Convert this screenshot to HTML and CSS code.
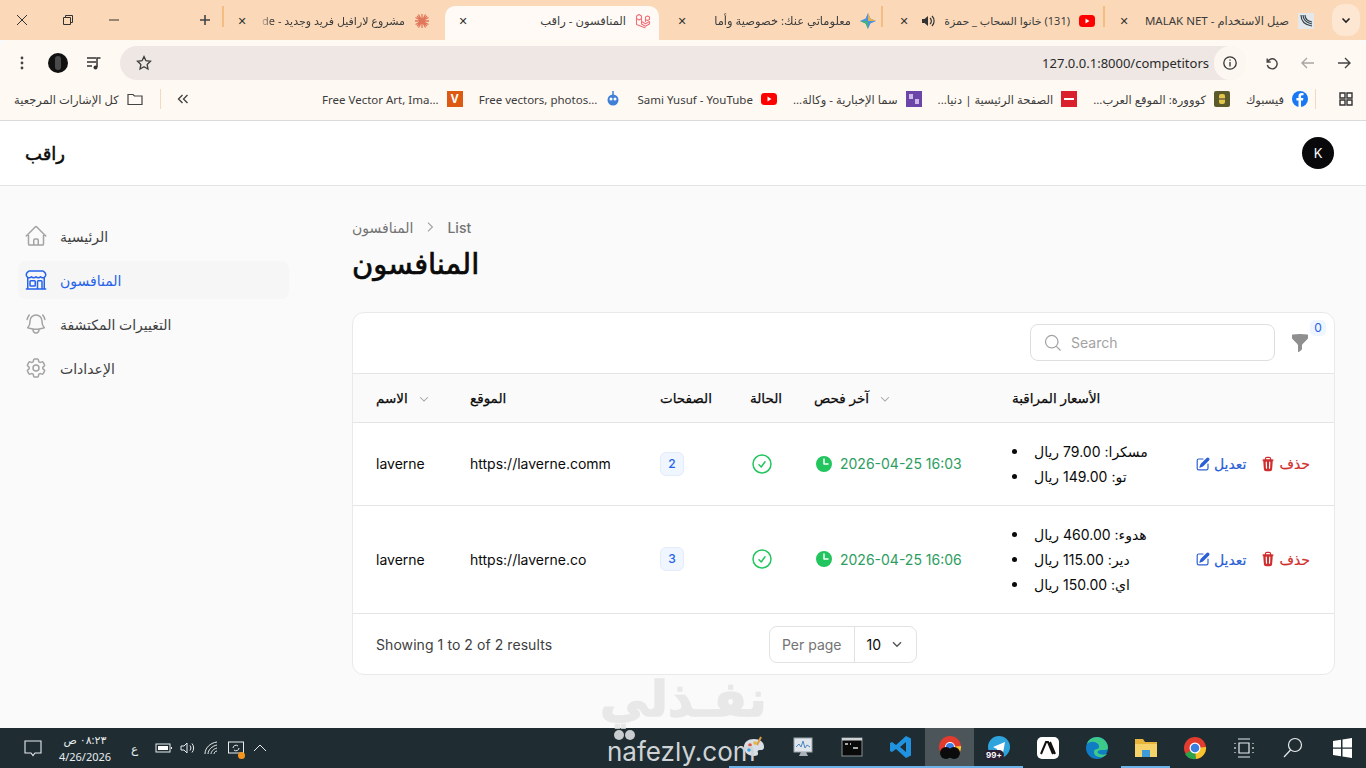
FILE: index.html
```html
<!DOCTYPE html>
<html lang="en">
<head>
    <meta charset="UTF-8">
    <title>المنافسون - راقب</title>
    <link rel="stylesheet" href="styles.css">
</head>
<body>

    <!-- Browser tabs -->
    <div class="tabstrip">
        <div class="win-controls">
            <svg class="win-icon" viewBox="0 0 12 12"><path d="M1 1l10 10M11 1L1 11"/></svg>
            <svg class="win-icon" viewBox="0 0 12 12"><path d="M1.5 3.5h7v7h-7zM3.5 3.5v-2h7v7h-2"/></svg>
            <svg class="win-icon" viewBox="0 0 12 12"><path d="M1 6h10"/></svg>
        </div>
        <svg class="new-tab" viewBox="0 0 12 12"><path d="M6 1v10M1 6h10"/></svg>
        <div class="tab tab-first">
            <span class="tab-x">✕</span>
            <span class="tab-title">مشروع لارافيل فريد وجديد - de</span>
            <svg class="favicon" viewBox="0 0 16 16"><path d="M8 1v14M1 8h14M3 3l10 10M13 3L3 13M4.5 1.5l7 13M11.5 1.5l-7 13M1.5 4.5l13 7M14.5 4.5l-13 7" stroke="#e0765a" stroke-width="1.3"/></svg>
        </div>
        <div class="tab tab-active">
            <span class="tab-x">✕</span>
            <span class="tab-title">المنافسون - راقب</span>
            <svg class="favicon" viewBox="0 0 16 16" fill="none" stroke="#f0717a" stroke-width="1.1" stroke-linejoin="round"><path d="M1.500 3l2.500-1.500L6.500 3v8l4 2.300 4-2.300V8.500l-4 2.300-4-2.300M1.500 3v8.500l9 3.500M6.500 5.500L4 7 1.500 5.500M10.500 4l2-1 2 1v2.500l-2 1-2-1zM10.500 6.500V9"/></svg>
        </div>
        <div class="tab tab-gem">
            <span class="tab-x">✕</span>
            <span class="tab-title">معلوماتي عنك: خصوصية وأما</span>
            <svg class="favicon" viewBox="0 0 16 16"><path d="M8 0l2.400 5.600L16 8l-5.600 2.400L8 16l-2.400-5.600L0 8l5.600-2.400z" fill="#4a90e2"/><path d="M8 0l2.400 5.600L16 8H8z" fill="#e8b04a"/><path d="M0 8h8v8L5.600 10.400z" fill="#3fb27f"/></svg>
        </div>
        <div class="tab tab-audio">
            <span class="tab-x">✕</span>
            <svg class="favicon tab-sound" viewBox="0 0 16 16"><path d="M2 6h2.500L8 3v10L4.500 10H2z" fill="#333"/><path d="M10 5a4 4 0 0 1 0 6M12 3a7 7 0 0 1 0 10" fill="none" stroke="#333" stroke-width="1.200"/></svg>
            <span class="tab-title">(131) خانوا السحاب _ حمزة</span>
            <svg class="favicon" viewBox="0 0 16 16"><rect y="2" width="16" height="12" rx="3.500" fill="#f00"/><path d="M6.500 5.500v5l4-2.500z" fill="#fff"/></svg>
        </div>
        <div class="tab">
            <span class="tab-x">✕</span>
            <span class="tab-title">صيل الاستخدام - MALAK NET</span>
            <svg class="favicon" viewBox="0 0 16 16" fill="none" stroke="#31424e" stroke-width="1.200"><rect width="16" height="16" fill="#e4e8ea" stroke="none"/><path d="M3 2c0 6 4 10 11 11M5 2c0 4 3 8 9 9M7 2c0 3 2 6 7 7"/></svg>
        </div>
        <div class="tab-search"><svg viewBox="0 0 12 12"><path d="M2.500 4.500L6 8l3.500-3.500"/></svg></div>
    </div>

    <!-- Address bar -->
    <div class="toolbar">
        <svg class="tool-icon" viewBox="0 0 16 16"><circle cx="8" cy="3" r="1.400" fill="#444"/><circle cx="8" cy="8" r="1.400" fill="#444"/><circle cx="8" cy="13" r="1.400" fill="#444"/></svg>
        <span class="profile"><i></i></span>
        <svg class="tool-icon" viewBox="0 0 16 16"><path d="M1 3h9M1 7h9M1 11h5" stroke="#333" stroke-width="1.500" fill="none"/><path d="M11 12V3h3.500" stroke="#333" stroke-width="1.500" fill="none"/><circle cx="9.500" cy="12.500" r="2" fill="#333"/></svg>
        <div class="omnibox">
            <svg class="star" viewBox="0 0 24 24"><path d="M12 3.500l2.600 5.500 6 .8-4.400 4.200 1.100 6L12 17l-5.300 3 1.100-6-4.400-4.200 6-.8z"/></svg>
            <span class="url">127.0.0.1:8000/competitors</span>
            <span class="site-info"><svg viewBox="0 0 16 16"><circle cx="8" cy="8" r="6.200"/><path d="M8 7v4.500M8 4.500v1.200"/></svg></span>
        </div>
        <svg class="nav-icon nav-first" viewBox="0 0 16 16"><path d="M3.200 3.500v3.500h3.500M3.500 7a5 5 0 1 1-.2 3"/></svg>
        <svg class="nav-icon nav-dim" viewBox="0 0 16 16"><path d="M14 8H2M7 3L2 8l5 5"/></svg>
        <svg class="nav-icon" viewBox="0 0 16 16"><path d="M2 8h12M9 3l5 5-5 5"/></svg>
    </div>

    <!-- Bookmarks -->
    <div class="bookmarks">
        <span class="bm-text bm-rtl">كل الإشارات المرجعية</span>
        <svg class="bm-folder" viewBox="0 0 16 16"><path d="M1 3.500h5l1.500 1.500H15v8.500H1z"/></svg>
        <span class="bm-sep"></span>
        <svg class="bm-more" viewBox="0 0 12 12"><path d="M5.500 2L1.500 6l4 4M10.500 2l-4 4 4 4"/></svg>
        <div class="bm-list">
            <span class="bm-text">Free Vector Art, Ima...</span>
            <span class="bm-fav bm-v">V</span>
            <span class="bm-text">Free vectors, photos...</span>
            <svg class="bm-fav" viewBox="0 0 16 16"><circle cx="8" cy="9" r="5.500" fill="#3f7fd8"/><circle cx="6" cy="8" r="1.500" fill="#fff"/><circle cx="10" cy="8" r="1.500" fill="#fff"/><path d="M8 0v4" stroke="#3f7fd8" stroke-width="1.500"/></svg>
            <span class="bm-text">Sami Yusuf - YouTube</span>
            <svg class="bm-fav" viewBox="0 0 16 16"><rect y="2" width="16" height="12" rx="3.500" fill="#f00"/><path d="M6.500 5.500v5l4-2.500z" fill="#fff"/></svg>
            <span class="bm-text bm-rtl">سما الإخبارية - وكالة...</span>
            <svg class="bm-fav" viewBox="0 0 16 16"><rect width="16" height="16" fill="#6b45a8"/><rect x="3" y="3" width="4" height="5" fill="#cdb9e8"/><rect x="9" y="8" width="4" height="5" fill="#cdb9e8"/></svg>
            <span class="bm-text bm-rtl">الصفحة الرئيسية | دنيا...</span>
            <svg class="bm-fav" viewBox="0 0 16 16"><rect width="16" height="16" fill="#d9202c"/><path d="M3 8h10" stroke="#fff" stroke-width="2"/></svg>
            <span class="bm-text bm-rtl">كووورة: الموقع العرب...</span>
            <svg class="bm-fav" viewBox="0 0 16 16"><rect width="16" height="16" rx="2" fill="#5a5a2c"/><rect x="5" y="3" width="6" height="10" rx="2" fill="#e5c64a"/><path d="M5 8h6" stroke="#333"/></svg>
            <span class="bm-text">فيسبوك</span>
            <svg class="bm-fav" viewBox="0 0 16 16"><circle cx="8" cy="8" r="8" fill="#1877f2"/><path d="M9 16V9.500h2l.4-2.500H9V5.600c0-.8.300-1.300 1.400-1.300h1.100V2.100C11 2 10.300 2 9.700 2 7.800 2 6.500 3.100 6.500 5.300V7H4.400v2.500h2.100V16z" fill="#fff"/></svg>
        </div>
        <span class="bm-sep bm-sep-right"></span>
        <svg class="bm-grid" viewBox="0 0 16 16"><path d="M2 2h5v5H2zM9 2h5v5H9zM2 9h5v5H2zM9 9h5v5H9z"/></svg>
    </div>

    <!-- App header -->
    <div class="topbar">
        <div class="brand">راقب</div>
        <div class="avatar">K</div>
    </div>

    <div class="layout">
        <div class="sidebar">
            <a class="nav-item">
                <svg class="nav-svg" viewBox="0 0 24 24"><path d="m2.250 12 8.954-8.955c.44-.439 1.152-.439 1.591 0L21.750 12M4.500 9.750v10.125c0 .621.504 1.125 1.125 1.125H9.750v-4.875c0-.621.504-1.125 1.125-1.125h2.250c.621 0 1.125.504 1.125 1.125V21h4.125c.621 0 1.125-.504 1.125-1.125V9.750M8.250 21h8.250"/></svg>
                الرئيسية
            </a>
            <a class="nav-item nav-active">
                <svg class="nav-svg" viewBox="0 0 24 24"><path d="M13.500 21v-7.500a.75.75 0 0 1 .75-.75h3a.75.75 0 0 1 .75.75V21m-4.500 0H2.360m11.140 0H18m0 0h3.640m-1.390 0V9.349M3.750 21V9.349m0 0a3.001 3.001 0 0 0 3.750-.615A2.993 2.993 0 0 0 9.750 9.750c.896 0 1.700-.393 2.250-1.016a2.993 2.993 0 0 0 2.250 1.016c.896 0 1.700-.393 2.250-1.015a3.001 3.001 0 0 0 3.750.614m-16.500 0a3.004 3.004 0 0 1-.621-4.720l1.189-1.190A1.500 1.500 0 0 1 5.378 3h13.243a1.500 1.500 0 0 1 1.060.44l1.190 1.189a3 3 0 0 1-.621 4.720M6.750 18h3.750a.75.75 0 0 0 .75-.75V13.500a.75.75 0 0 0-.75-.75H6.750a.75.75 0 0 0-.75.75v3.750c0 .414.336.75.75.75Z"/></svg>
                المنافسون
            </a>
            <a class="nav-item">
                <svg class="nav-svg" viewBox="0 0 24 24"><path d="M14.857 17.082a23.848 23.848 0 0 0 5.454-1.310A8.967 8.967 0 0 1 18 9.750V9A6 6 0 0 0 6 9v.75a8.967 8.967 0 0 1-2.312 6.022c1.733.64 3.560 1.085 5.455 1.310m5.714 0a24.255 24.255 0 0 1-5.714 0m5.714 0a3 3 0 1 1-5.714 0M3.124 7.500A8.969 8.969 0 0 1 5.292 3m13.416 0a8.969 8.969 0 0 1 2.168 4.500"/></svg>
                التغييرات المكتشفة
            </a>
            <a class="nav-item">
                <svg class="nav-svg" viewBox="0 0 24 24"><path d="M9.594 3.940c.09-.542.56-.94 1.110-.94h2.593c.55 0 1.020.398 1.110.94l.213 1.281c.063.374.313.686.645.87.074.04.147.083.22.127.325.196.72.257 1.075.124l1.217-.456a1.125 1.125 0 0 1 1.370.49l1.296 2.247a1.125 1.125 0 0 1-.26 1.431l-1.003.827c-.293.241-.438.613-.43.992a7.723 7.723 0 0 1 0 .255c-.008.378.137.75.43.991l1.004.827c.424.35.534.955.26 1.430l-1.298 2.247a1.125 1.125 0 0 1-1.369.491l-1.217-.456c-.355-.133-.75-.072-1.076.124a6.470 6.470 0 0 1-.22.128c-.331.183-.581.495-.644.869l-.213 1.281c-.09.543-.56.94-1.110.94h-2.594c-.55 0-1.019-.398-1.110-.94l-.213-1.281c-.062-.374-.312-.686-.644-.87a6.520 6.520 0 0 1-.22-.127c-.325-.196-.72-.257-1.076-.124l-1.217.456a1.125 1.125 0 0 1-1.369-.49l-1.297-2.247a1.125 1.125 0 0 1 .26-1.431l1.004-.827c.292-.24.437-.613.43-.991a6.932 6.932 0 0 1 0-.255c.007-.38-.138-.751-.43-.992l-1.004-.827a1.125 1.125 0 0 1-.26-1.430l1.297-2.247a1.125 1.125 0 0 1 1.370-.491l1.216.456c.356.133.751.072 1.076-.124.072-.044.146-.086.22-.128.332-.183.582-.495.644-.869l.214-1.280Z"/><path d="M15 12a3 3 0 1 1-6 0 3 3 0 0 1 6 0Z"/></svg>
                الإعدادات
            </a>
        </div>

        <div class="main">
            <div class="breadcrumb">
                <span>المنافسون</span>
                <svg viewBox="0 0 20 20"><path d="M7.500 4.500L13 10l-5.500 5.500"/></svg>
                <span>List</span>
            </div>
            <h1 class="page-title">المنافسون</h1>

            <div class="card">
                <div class="card-tools">
                    <div class="search">
                        <svg viewBox="0 0 24 24"><path d="m21 21-5.197-5.197m0 0A7.500 7.500 0 1 0 5.196 5.196a7.500 7.500 0 0 0 10.607 10.607Z"/></svg>
                        <span>Search</span>
                    </div>
                    <div class="filter">
                        <svg viewBox="0 0 20 20"><path d="M2.628 1.601C5.028 1.206 7.490 1 10 1s4.973.206 7.372.601a.75.75 0 0 1 .628.74v2.288a2.250 2.250 0 0 1-.659 1.590l-4.682 4.683a2.250 2.250 0 0 0-.659 1.590v3.037c0 .684-.31 1.330-.844 1.757l-1.937 1.550A.75.75 0 0 1 8 18.250v-5.757a2.250 2.250 0 0 0-.659-1.591L2.659 6.220A2.250 2.250 0 0 1 2 4.629V2.340a.75.75 0 0 1 .628-.74Z"/></svg>
                        <span class="filter-count">0</span>
                    </div>
                </div>

                <table class="data-table">
                    <colgroup>
                        <col class="col-name"><col class="col-site"><col class="col-pages"><col class="col-status"><col class="col-last"><col class="col-prices"><col class="col-actions">
                    </colgroup>
                    <thead>
                        <tr>
                            <th>الاسم <svg class="sort" viewBox="0 0 20 20"><path d="M4.500 7.500L10 13l5.500-5.500"/></svg></th>
                            <th>الموقع</th>
                            <th>الصفحات</th>
                            <th>الحالة</th>
                            <th>آخر فحص <svg class="sort" viewBox="0 0 20 20"><path d="M4.500 7.500L10 13l5.500-5.500"/></svg></th>
                            <th>الأسعار المراقبة</th>
                            <th></th>
                        </tr>
                    </thead>
                    <tbody>
                        <tr class="row-short">
                            <td>laverne</td>
                            <td>https://laverne.comm</td>
                            <td><span class="badge">2</span></td>
                            <td><svg class="ok" viewBox="0 0 24 24"><path d="M9 12.750 11.250 15 15 9.750M21 12a9 9 0 1 1-18 0 9 9 0 0 1 18 0Z"/></svg></td>
                            <td><span class="checked"><svg viewBox="0 0 20 20"><path fill-rule="evenodd" d="M10 18a8 8 0 1 0 0-16 8 8 0 0 0 0 16Zm.75-13a.75.75 0 0 0-1.500 0v5c0 .414.336.75.75.75h4a.75.75 0 0 0 0-1.500h-3.250V5Z"/></svg>2026-04-25 16:03</span></td>
                            <td>
                                <ul class="prices">
                                    <li>مسكرا: 79.00 ريال</li>
                                    <li>تو: 149.00 ريال</li>
                                </ul>
                            </td>
                            <td>
                                <div class="actions">
                                    <a class="act act-edit"><svg viewBox="0 0 20 20"><path d="m5.433 13.917 1.262-3.155A4 4 0 0 1 7.580 9.420l6.920-6.918a2.121 2.121 0 0 1 3 3l-6.920 6.918c-.383.383-.84.685-1.343.886l-3.154 1.262a.5.5 0 0 1-.65-.65Z"/><path d="M3.500 5.750c0-.69.56-1.250 1.250-1.250H10A.75.75 0 0 0 10 3H4.750A2.750 2.750 0 0 0 2 5.750v9.500A2.750 2.750 0 0 0 4.750 18h9.500A2.750 2.750 0 0 0 17 15.250V10a.75.75 0 0 0-1.500 0v5.250c0 .69-.56 1.250-1.250 1.250h-9.500c-.69 0-1.250-.56-1.250-1.250v-9.500Z"/></svg>تعديل</a>
                                    <a class="act act-del"><svg viewBox="0 0 20 20"><path fill-rule="evenodd" d="M8.750 1A2.750 2.750 0 0 0 6 3.750v.443c-.795.077-1.584.176-2.365.298a.75.75 0 1 0 .23 1.482l.149-.022.841 10.518A2.750 2.750 0 0 0 7.596 19h4.807a2.750 2.750 0 0 0 2.742-2.530l.841-10.520.149.023a.75.75 0 0 0 .23-1.482A41.030 41.030 0 0 0 14 4.193V3.750A2.750 2.750 0 0 0 11.250 1h-2.500ZM10 4c.84 0 1.673.025 2.500.075V3.750c0-.69-.56-1.250-1.250-1.250h-2.500c-.69 0-1.250.56-1.250 1.250v.325C8.327 4.025 9.160 4 10 4ZM8.580 7.720a.75.75 0 0 0-1.500.06l.3 7.500a.75.75 0 1 0 1.500-.06l-.3-7.500Zm4.340.06a.75.75 0 1 0-1.500-.06l-.3 7.500a.75.75 0 1 0 1.500.06l.3-7.500Z"/></svg>حذف</a>
                                </div>
                            </td>
                        </tr>
                        <tr class="row-tall">
                            <td>laverne</td>
                            <td>https://laverne.co</td>
                            <td><span class="badge">3</span></td>
                            <td><svg class="ok" viewBox="0 0 24 24"><path d="M9 12.750 11.250 15 15 9.750M21 12a9 9 0 1 1-18 0 9 9 0 0 1 18 0Z"/></svg></td>
                            <td><span class="checked"><svg viewBox="0 0 20 20"><path fill-rule="evenodd" d="M10 18a8 8 0 1 0 0-16 8 8 0 0 0 0 16Zm.75-13a.75.75 0 0 0-1.500 0v5c0 .414.336.75.75.75h4a.75.75 0 0 0 0-1.500h-3.250V5Z"/></svg>2026-04-25 16:06</span></td>
                            <td>
                                <ul class="prices">
                                    <li>هدوء: 460.00 ريال</li>
                                    <li>دير: 115.00 ريال</li>
                                    <li>اي: 150.00 ريال</li>
                                </ul>
                            </td>
                            <td>
                                <div class="actions">
                                    <a class="act act-edit"><svg viewBox="0 0 20 20"><path d="m5.433 13.917 1.262-3.155A4 4 0 0 1 7.580 9.420l6.920-6.918a2.121 2.121 0 0 1 3 3l-6.920 6.918c-.383.383-.84.685-1.343.886l-3.154 1.262a.5.5 0 0 1-.65-.65Z"/><path d="M3.500 5.750c0-.69.56-1.250 1.250-1.250H10A.75.75 0 0 0 10 3H4.750A2.750 2.750 0 0 0 2 5.750v9.500A2.750 2.750 0 0 0 4.750 18h9.500A2.750 2.750 0 0 0 17 15.250V10a.75.75 0 0 0-1.500 0v5.250c0 .69-.56 1.250-1.250 1.250h-9.500c-.69 0-1.250-.56-1.250-1.250v-9.500Z"/></svg>تعديل</a>
                                    <a class="act act-del"><svg viewBox="0 0 20 20"><path fill-rule="evenodd" d="M8.750 1A2.750 2.750 0 0 0 6 3.750v.443c-.795.077-1.584.176-2.365.298a.75.75 0 1 0 .23 1.482l.149-.022.841 10.518A2.750 2.750 0 0 0 7.596 19h4.807a2.750 2.750 0 0 0 2.742-2.530l.841-10.520.149.023a.75.75 0 0 0 .23-1.482A41.030 41.030 0 0 0 14 4.193V3.750A2.750 2.750 0 0 0 11.250 1h-2.500ZM10 4c.84 0 1.673.025 2.500.075V3.750c0-.69-.56-1.250-1.250-1.250h-2.500c-.69 0-1.250.56-1.250 1.250v.325C8.327 4.025 9.160 4 10 4ZM8.580 7.720a.75.75 0 0 0-1.500.06l.3 7.500a.75.75 0 1 0 1.500-.06l-.3-7.500Zm4.340.06a.75.75 0 1 0-1.500-.06l-.3 7.500a.75.75 0 1 0 1.500.06l.3-7.500Z"/></svg>حذف</a>
                                </div>
                            </td>
                        </tr>
                    </tbody>
                </table>

                <div class="card-foot">
                    <span class="results">Showing 1 to 2 of 2 results</span>
                    <div class="per-page">
                        <span class="per-label">Per page</span>
                        <span class="per-value">10 <svg viewBox="0 0 20 20"><path d="M5.500 8L10 12.500 14.500 8"/></svg></span>
                    </div>
                </div>
            </div>
        </div>
    </div>

    <!-- Windows taskbar -->
    <div class="taskbar">
        <div class="tray">
            <svg class="tray-note" viewBox="0 0 18 18"><path d="M1 2h16v12h-6l-2 2.500L7 14H1z"/></svg>
            <div class="clock"><span>٠٨:٢٣ ص</span><span>4/26/2026</span></div>
            <span class="lang">ع</span>
            <svg class="tray-icon" viewBox="0 0 18 18"><rect x="1" y="5" width="14" height="8"/><rect x="3" y="7" width="10" height="4" fill="#fff" stroke="none"/><path d="M16.500 8v2"/></svg>
            <svg class="tray-icon" viewBox="0 0 18 18"><path d="M2 7h3l3-3v10l-3-3H2zM11 6.500a4 4 0 0 1 0 5M13 4.500a7 7 0 0 1 0 9"/></svg>
            <svg class="tray-icon" viewBox="0 0 18 18"><path d="M2 15C2 9 7 4 14 3M5 15c0-4 4-8 9-9M8 15c0-2 2-5 6-6M11 15c0-1 1-3 3-3"/></svg>
            <span class="tray-update">
                <svg class="tray-icon" viewBox="0 0 18 18"><rect x="1.500" y="3" width="15" height="11"/><path d="M6 9a3 3 0 0 1 5-2M12 9a3 3 0 0 1-5 2"/></svg>
                <i></i>
            </span>
            <svg class="tray-icon" viewBox="0 0 18 18"><path d="M3 12l6-6 6 6"/></svg>
        </div>
        <div class="apps">
            <span class="app app-open"><svg viewBox="0 0 24 24"><path d="M12 4c6 0 10 3 10 8 0 3-2 3-4 3-2 0-3 1-2 3 .5 2-1 3-4 3C6 21 2 17 2 12s4-8 10-8z" fill="#d9dfe6"/><circle cx="8" cy="10" r="1.800" fill="#e0553f"/><circle cx="13" cy="8" r="1.800" fill="#e0b93f"/><circle cx="7" cy="15" r="1.800" fill="#3f9fe0"/><path d="M19 2l-4 8" stroke="#e09a3f" stroke-width="2"/></svg></span>
            <span class="app app-open"><svg viewBox="0 0 24 24"><rect x="3" y="3" width="18" height="14" fill="#dfe5ea" stroke="#9aa3ab"/><path d="M5 12l3-3 2 3 2-6 2 7 2-3 3 2" fill="none" stroke="#4a86c5"/><path d="M8 21h9l-2-4H10z" fill="#aab2b8"/></svg></span>
            <span class="app app-open"><svg viewBox="0 0 24 24"><rect x="2" y="3" width="20" height="18" fill="#0a0a0a" stroke="#8b8f92"/><rect x="2" y="3" width="20" height="2.500" fill="#cfd3d6"/><path d="M5 9h3M10 9h1M13 13h5" stroke="#ddd" stroke-width="1.300"/></svg></span>
            <span class="app app-open"><svg viewBox="0 0 24 24"><path d="M17 1l5 2.500v17L17 23 7 14l-4 3-2-1V8l2-1 4 3zM17 7l-6 5 6 5z" fill="#1f93e0"/></svg></span>
            <span class="app app-open app-active">
                <svg viewBox="0 0 24 24"><circle cx="12" cy="12" r="11" fill="#e33b2e"/><path d="M12 12L2 18a11 11 0 0 0 11 5z" fill="#2aa34a"/><path d="M12 12l11-1a11 11 0 0 1-10 12z" fill="#f7c52b"/><circle cx="12" cy="12" r="5" fill="#fff"/><circle cx="12" cy="12" r="4" fill="#3b7de0"/><circle cx="8" cy="18" r="6" fill="#0b0b0b"/><circle cx="16" cy="18" r="6" fill="#0b0b0b"/></svg>
            </span>
            <span class="app app-open app-tele">
                <svg viewBox="0 0 24 24"><circle cx="12" cy="12" r="11" fill="#2ea3dc"/><path d="M6 12l12-5-2 11-4-3-2 2v-3z" fill="#fff"/></svg>
                <b class="app-count">99+</b>
            </span>
            <span class="app"><svg viewBox="0 0 24 24"><rect x="1" y="1" width="22" height="22" rx="5" fill="#fff"/><path d="M5 18L10 6h2l5 12M14 6l5 12" fill="none" stroke="#111" stroke-width="2"/></svg></span>
            <span class="app"><svg viewBox="0 0 24 24"><circle cx="12" cy="12" r="11" fill="#0f7cc4"/><path d="M23 12c0-6-5-11-11-11C7 1 3 4 2 8c3-3 8-3 11 0 2 2 1 5-1 5-3 0-4 3-2 6 3 3 9 3 12-1-3 1-7 1-9-1-1-2 1-3 4-3 3 0 6 0 6-2z" fill="#3cc98a"/></svg></span>
            <span class="app app-open"><svg viewBox="0 0 24 24"><path d="M1 4h8l2 3h12v15H1z" fill="#e7b53c"/><rect x="1" y="9" width="22" height="13" fill="#f6d26a"/><rect x="8" y="15" width="8" height="7" fill="#3f9ad8"/></svg></span>
            <span class="app"><svg viewBox="0 0 24 24"><circle cx="12" cy="12" r="11" fill="#e33b2e"/><path d="M12 12L2 18a11 11 0 0 0 11 5z" fill="#2aa34a"/><path d="M12 12l11-1a11 11 0 0 1-10 12z" fill="#f7c52b"/><circle cx="12" cy="12" r="5.500" fill="#fff"/><circle cx="12" cy="12" r="4.300" fill="#3b7de0"/></svg></span>
            <span class="app"><svg class="app-line" viewBox="0 0 24 24"><path d="M6 3h12M6 21h12M7 7h10v10H7zM3 7v1M3 11v2M3 16v1M21 7v1M21 11v2M21 16v1"/></svg></span>
            <span class="app"><svg class="app-line" viewBox="0 0 24 24"><circle cx="14" cy="9" r="6.500"/><path d="M9.500 14L3 21"/></svg></span>
            <span class="app"><svg viewBox="0 0 24 24"><path d="M3 5l8-1.200V11.500H3zM12.500 3.500L22 2v9.500h-9.500zM3 12.800h8v7.500L3 19zM12.500 12.800H22V22l-9.500-1.500z" fill="#fff"/></svg></span>
        </div>
    </div>

    <!-- Site watermark over the screenshot -->
    <div class="watermark">
        <div class="wm-ar">نفـذلي</div>
        <i class="wm-dot wm-dot-a"></i>
        <i class="wm-dot wm-dot-b"></i>
        <div class="wm-en">nafezly.com</div>
    </div>

</body>
</html>
```

FILE: styles.css
```css
* {
    box-sizing: border-box;
}

html, body {
    height: 100%;
}

body {
    margin: 0;
    display: flex;
    flex-direction: column;
    overflow: hidden;
    background: #fafafa;
    color: #0a0a0a;
    font-family: Inter, "Noto Sans", "DejaVu Sans", sans-serif;
    font-size: 14px;
    position: relative;
}

svg {
    display: block;
    flex-shrink: 0;
}

/* Browser tabs */
.tabstrip {
    height: 40px;
    display: flex;
    align-items: flex-end;
    background: #fbd9b8;
    font-family: "Noto Sans", "DejaVu Sans", sans-serif;
    font-size: 11.500px;
    color: #3c3c3c;
}

.win-controls {
    display: flex;
    align-items: center;
    gap: 34px;
    height: 40px;
    padding-left: 16px;
    width: 186px;
}

.win-icon {
    width: 12px;
    height: 12px;
    fill: none;
    stroke: #333;
    stroke-width: 1;
}

.new-tab {
    width: 12px;
    height: 12px;
    margin: 0 11px 14px 13px;
    fill: none;
    stroke: #444;
    stroke-width: 1.6;
}

.tab {
    width: 222px;
    height: 34px;
    padding: 0 11px 5px 12px;
    display: flex;
    align-items: center;
    gap: 9px;
    border-left: 2px solid transparent;
    white-space: nowrap;
    overflow: hidden;
}

.tabstrip > .tab:nth-child(3),
.tabstrip > .tab:nth-child(6),
.tabstrip > .tab:nth-child(7) {
    border-left-color: #f3bd84;
    border-image: linear-gradient(to bottom, #f3bd84 60%, transparent 60%) 1;
}

.tab-first {
    width: 223px;
    padding-left: 11px;
    padding-right: 15px;
    font-size: 11px;
}

.tab-first .tab-title,
.tab-gem .tab-title {
    -webkit-mask-image: linear-gradient(to right, transparent, #000 14px);
    mask-image: linear-gradient(to right, transparent, #000 14px);
}

.tab-active {
    width: 214px;
    padding-left: 9px;
    padding-right: 8px;
    background: #fffaf5;
    border-radius: 10px 10px 0 0;
}

.tab-gem {
    padding-left: 14px;
    padding-right: 5px;
}

.tab-audio {
    padding-left: 14px;
    padding-right: 8px;
    font-size: 11px;
}

.tab-x {
    font-size: 11px;
    width: 14px;
    text-align: center;
    color: #333;
}

.tab-title {
    flex: 1;
    direction: rtl;
    text-align: right;
    overflow: hidden;
    white-space: nowrap;
}

.tab-sound {
    width: 14px;
    height: 14px;
}

.favicon {
    width: 16px;
    height: 16px;
}

.tab-search {
    width: 28px;
    height: 32px;
    margin: 0 6px 4px auto;
    background: #fde7d2;
    border-radius: 12px;
    display: flex;
    align-items: center;
    justify-content: center;
}

.tab-search svg {
    width: 12px;
    height: 12px;
    fill: none;
    stroke: #222;
    stroke-width: 1.6;
}

/* Address bar */
.toolbar {
    height: 40px;
    background: #fff9f3;
    display: flex;
    align-items: center;
    padding: 6px 12px 0 14px;
    border-radius: 10px 10px 0 0;
}

.tool-icon {
    width: 16px;
    height: 16px;
}

.profile {
    width: 20px;
    height: 20px;
    margin: 0 18px 0 18px;
    border-radius: 50%;
    background: #111;
    display: flex;
    align-items: center;
    justify-content: center;
}

.profile i {
    width: 6px;
    height: 14px;
    background: #4a4a4a;
    border-radius: 3px;
}

.omnibox {
    width: 1126px;
    height: 34px;
    margin-left: 18px;
    background: #efe7e4;
    border-radius: 17px;
    display: flex;
    align-items: center;
    padding: 0 0 0 15px;
    font-family: "Noto Sans", sans-serif;
    font-size: 13px;
    color: #2a2a2a;
}

.star {
    width: 18px;
    height: 18px;
    fill: none;
    stroke: #3f3f3f;
    stroke-width: 1.800;
}

.url {
    margin-left: auto;
    margin-right: 5px;
}

.site-info {
    width: 32px;
    height: 34px;
    border-radius: 17px;
    background: #fdf7f2;
    display: flex;
    align-items: center;
    justify-content: center;
}

.site-info svg {
    width: 16px;
    height: 16px;
    fill: none;
    stroke: #333;
    stroke-width: 1.300;
}

.nav-icon {
    width: 16px;
    height: 16px;
    margin-left: 20px;
    fill: none;
    stroke: #444;
    stroke-width: 1.400;
}

.nav-first {
    margin-left: 18px;
}

.nav-dim {
    stroke: #a9a5a2;
}

/* Bookmarks */
.bookmarks {
    height: 41px;
    background: #fff9f3;
    border-bottom: 1px solid #dcdad8;
    display: flex;
    align-items: center;
    padding: 0 12px 2px 14px;
    font-family: "Noto Sans", "DejaVu Sans", sans-serif;
    font-size: 11.500px;
    color: #3c3c3c;
}

.bm-text {
    white-space: nowrap;
}

.bm-rtl {
    direction: rtl;
}

.bm-folder {
    width: 16px;
    height: 16px;
    margin-left: 8px;
    fill: none;
    stroke: #444;
    stroke-width: 1.200;
}

.bm-sep {
    width: 1px;
    height: 20px;
    background: #f3d9bd;
    margin: 0 16px 0 17px;
}

.bm-sep-right {
    margin: 0 22px 0 7px;
}

.bm-more {
    width: 12px;
    height: 12px;
    fill: none;
    stroke: #444;
    stroke-width: 1.400;
}

.bm-list {
    margin-left: auto;
    display: flex;
    align-items: center;
    gap: 8px;
}

.bm-fav {
    width: 16px;
    height: 16px;
    margin-right: 8px;
}

.bm-list > :last-child {
    margin-right: 0;
}

.bm-v {
    background: #dd5a13;
    color: #fff;
    font-weight: 700;
    font-size: 12px;
    text-align: center;
    line-height: 16px;
}

.bm-grid {
    width: 16px;
    height: 16px;
    fill: none;
    stroke: #333;
    stroke-width: 1.400;
}

/* App header */
.topbar {
    height: 65px;
    background: #fff;
    border-bottom: 1px solid #e5e5e5;
    display: flex;
    align-items: center;
    justify-content: space-between;
    padding: 0 32px 0 25px;
}

.brand {
    font-size: 18px;
    font-weight: 400;
    -webkit-text-stroke: 0.5px #0a0a0a;
    color: #0a0a0a;
}

.avatar {
    width: 32px;
    height: 32px;
    border-radius: 50%;
    background: #09090b;
    color: #fff;
    font-size: 13px;
    display: flex;
    align-items: center;
    justify-content: center;
}

/* Sidebar + content */
.layout {
    flex: 1;
    display: flex;
    min-height: 0;
}

.sidebar {
    width: 320px;
    padding: 31px 31px 0 18px;
    display: flex;
    flex-direction: column;
    gap: 6px;
}

.nav-item {
    height: 38px;
    padding: 0 6px;
    display: flex;
    align-items: center;
    gap: 12px;
    border-radius: 8px;
    color: #404040;
    font-weight: 500;
    font-size: 14px;
}

.nav-svg {
    width: 24px;
    height: 24px;
    fill: none;
    stroke: #a3a3a3;
    stroke-width: 1.500;
    stroke-linecap: round;
    stroke-linejoin: round;
}

.nav-active {
    background: #f6f6f6;
    color: #2563eb;
}

.nav-active .nav-svg {
    stroke: #2563eb;
}

.main {
    flex: 1;
    padding: 31px 31px 0 32px;
}

.breadcrumb {
    display: flex;
    align-items: center;
    gap: 9px;
    height: 20px;
    color: #737373;
    font-weight: 500;
    font-size: 14px;
}

.breadcrumb svg {
    width: 16px;
    height: 16px;
    fill: none;
    stroke: #a3a3a3;
    stroke-width: 1.500;
}

.page-title {
    margin: 8px 0 0;
    height: 40px;
    font-size: 29px;
    line-height: 38px;
    font-weight: 400;
    -webkit-text-stroke: 0.7px #0a0a0a;
    color: #0a0a0a;
}

.card {
    margin-top: 27px;
    height: 363px;
    background: #fff;
    border: 1px solid #e9e9e9;
    border-radius: 12px;
    overflow: hidden;
}

.card-tools {
    height: 61px;
    padding: 11px 24px 0 0;
    display: flex;
    justify-content: flex-end;
    gap: 15px;
    border-bottom: 1px solid #e5e5e5;
}

.search {
    width: 245px;
    height: 37px;
    border: 1px solid #dedede;
    border-radius: 8px;
    display: flex;
    align-items: center;
    gap: 8px;
    padding-left: 12px;
    color: #a3a3a3;
}

.search svg {
    width: 20px;
    height: 20px;
    fill: none;
    stroke: #a3a3a3;
    stroke-width: 1.500;
}

.filter {
    position: relative;
    width: 20px;
    margin-top: 9px;
}

.filter svg {
    width: 20px;
    height: 20px;
    fill: #8f8f8f;
}

.filter-count {
    position: absolute;
    left: 20px;
    top: -13px;
    min-width: 16px;
    height: 16px;
    border-radius: 5px;
    background: #eff6ff;
    color: #2563eb;
    font-size: 12px;
    line-height: 16px;
    text-align: center;
}

/* Table */
.data-table {
    width: 981px;
    table-layout: fixed;
    border-collapse: collapse;
    font-size: 14px;
}

.col-name { width: 93px; }
.col-site { width: 190px; }
.col-pages { width: 90px; }
.col-status { width: 64px; }
.col-last { width: 198px; }
.col-prices { width: 184px; }
.col-actions { width: 162px; }

.data-table th {
    height: 48px;
    padding: 0 0 0 24px;
    background: #fafafa;
    text-align: left;
    font-weight: 400;
    -webkit-text-stroke: 0.25px #0a0a0a;
    font-size: 13.500px;
    color: #0a0a0a;
    border-bottom: 1px solid #e5e5e5;
    white-space: nowrap;
}

.data-table th:first-child,
.data-table td:first-child {
    padding-left: 23px;
}

.sort {
    display: inline-block;
    vertical-align: middle;
    width: 14px;
    height: 14px;
    margin-left: 5px;
    fill: none;
    stroke: #a3a3a3;
    stroke-width: 1.500;
}

.data-table td {
    padding: 0 0 0 24px;
    color: #0a0a0a;
    border-bottom: 1px solid #e5e5e5;
    white-space: nowrap;
}

.row-short td { height: 83px; }
.row-tall td { height: 108px; }

.badge {
    display: inline-block;
    width: 24px;
    height: 24px;
    line-height: 22px;
    text-align: center;
    border: 1px solid #e3ebfb;
    border-radius: 6px;
    background: #eff6ff;
    color: #2563eb;
    font-size: 12px;
    font-weight: 500;
}

.ok {
    width: 24px;
    height: 24px;
    fill: none;
    stroke: #22c55e;
    stroke-width: 1.500;
    stroke-linecap: round;
    stroke-linejoin: round;
}

.checked {
    display: flex;
    align-items: center;
    gap: 6px;
    color: #2d9d5f;
}

.checked svg {
    width: 20px;
    height: 20px;
    fill: #22c55e;
}

.prices {
    margin: 0;
    padding: 0;
    list-style: none;
    line-height: 25px;
}

.prices li {
    display: flex;
    align-items: center;
    gap: 17px;
}

.prices li::before {
    content: "";
    width: 5px;
    height: 5px;
    border-radius: 50%;
    background: #0a0a0a;
}

.actions {
    display: flex;
    justify-content: flex-end;
    gap: 14px;
    padding-right: 24px;
}

.act {
    display: flex;
    align-items: center;
    gap: 3px;
    font-weight: 500;
    -webkit-text-stroke: 0.2px currentColor;
}

.act svg {
    width: 16px;
    height: 16px;
}

.act-edit { color: #2a5fd6; }
.act-edit svg { fill: #2a5fd6; }
.act-del { color: #cf2e2e; }
.act-del svg { fill: #cf2e2e; }

.card-foot {
    height: 61px;
    padding: 0 24px 0 23px;
    display: grid;
    grid-template-columns: 1fr auto 1fr;
    align-items: center;
    color: #404040;
}

.results {
    letter-spacing: 0.07px;
}

.per-page {
    height: 37px;
    display: flex;
    align-items: center;
    border: 1px solid #e2e2e2;
    border-radius: 8px;
}

.per-label {
    padding: 0 12px;
    height: 100%;
    line-height: 35px;
    color: #737373;
    border-right: 1px solid #e2e2e2;
}

.per-value {
    display: flex;
    align-items: center;
    gap: 7px;
    padding: 0 10px 0 12px;
    color: #0a0a0a;
}

.per-value svg {
    width: 18px;
    height: 18px;
    fill: none;
    stroke: #555;
    stroke-width: 1.500;
}

/* Windows taskbar */
.taskbar {
    height: 40px;
    background: #1f2d33;
    display: flex;
    align-items: center;
    justify-content: space-between;
    color: #e8ecee;
}

.tray {
    display: flex;
    align-items: center;
    padding-left: 24px;
}

.tray-note {
    width: 18px;
    height: 18px;
    fill: none;
    stroke: #e8ecee;
    stroke-width: 1.100;
}

.clock {
    display: flex;
    flex-direction: column;
    align-items: center;
    width: 82px;
    margin-left: 2px;
    font-family: "Noto Sans", "DejaVu Sans", sans-serif;
    font-size: 11px;
    line-height: 17px;
}

.lang {
    margin-left: 5px;
    margin-right: 17px;
    font-size: 12px;
}

.tray-icon {
    width: 18px;
    height: 18px;
    margin-right: 6px;
    fill: none;
    stroke: #e8ecee;
    stroke-width: 1;
}

.tray-update {
    position: relative;
}

.tray-update i {
    position: absolute;
    right: 6px;
    bottom: -2px;
    width: 7px;
    height: 7px;
    border-radius: 50%;
    background: #f7941d;
}

.apps {
    display: flex;
    height: 40px;
}

.app {
    width: 49px;
    height: 40px;
    display: flex;
    align-items: center;
    justify-content: center;
    position: relative;
}

.app svg {
    width: 24px;
    height: 24px;
}

.app-line {
    fill: none;
    stroke: #e8ecee;
    stroke-width: 1.200;
}

.app-open {
    border-bottom: 2px solid #6db2e8;
}

.app-active {
    background: #4b555a;
}

.app-count {
    position: absolute;
    left: 10px;
    bottom: 6px;
    padding: 0 2px;
    background: #2b1f33;
    border-radius: 6px;
    color: #fff;
    font-size: 8px;
    font-weight: 700;
}

/* Watermark */
.watermark {
    position: absolute;
    left: 600px;
    top: 680px;
    width: 170px;
    height: 88px;
    pointer-events: none;
}

.wm-ar {
    position: absolute;
    left: 0;
    top: -15px;
    width: 166px;
    text-align: center;
    font-size: 49px;
    font-weight: 700;
    line-height: 68px;
    color: #e8e8e8;
    -webkit-text-stroke: 1.500px #e8e8e8;
    white-space: nowrap;
}

.wm-dot {
    position: absolute;
    top: 50px;
    width: 10px;
    height: 10px;
    border-radius: 50%;
    background: #c9cdcf;
}

.wm-dot-a { left: 14px; }
.wm-dot-b { left: 25px; }

.wm-en {
    position: absolute;
    left: 7px;
    top: 56px;
    font-size: 26px;
    line-height: 32px;
    color: #cfd3d5;
    white-space: nowrap;
}
```
